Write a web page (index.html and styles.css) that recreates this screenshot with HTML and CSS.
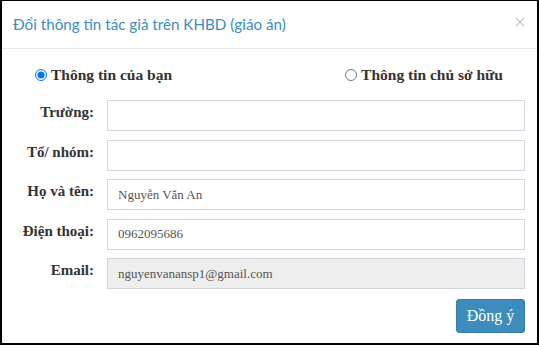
FILE: index.html
```html
<!DOCTYPE html>
<html lang="vi">
<head>
<meta charset="utf-8">
<link rel="stylesheet" href="styles.css">
</head>
<body>
<div class="modal">
  <div class="modal-header">
    <h4 class="modal-title">Đổi thông tin tác giả trên KHBD (giáo án)</h4>
    <span class="close"><svg width="10" height="10" viewBox="0 0 10 10"><path d="M1 1L9 9M9 1L1 9" stroke="#c4c4c4" stroke-width="1.1" fill="none"/></svg></span>
  </div>
  <div class="modal-body">
    <div class="radios">
      <label class="radio"><input type="radio" name="who" checked> Thông tin của bạn</label>
      <label class="radio"><input type="radio" name="who"> Thông tin chủ sở hữu</label>
    </div>
    <div class="form">
      <label class="lbl">Trường:</label><div class="input"></div>
      <label class="lbl">Tổ/ nhóm:</label><div class="input"></div>
      <label class="lbl">Họ và tên:</label><div class="input">Nguyễn Văn An</div>
      <label class="lbl">Điện thoại:</label><div class="input">0962095686</div>
      <label class="lbl">Email:</label><div class="input disabled">nguyenvanansp1@gmail.com</div>
    </div>
    <div class="footer">
      <button class="btn">Đồng ý</button>
    </div>
  </div>
</div>
</body>
</html>
```
FILE: styles.css
```css
* { box-sizing: border-box; }
html, body { margin: 0; padding: 0; background: #fff; }
.modal {
  width: 539px;
  height: 345px;
  border-style: solid;
  border-color: #000;
  border-width: 1px 2px 2px 2px;
  font-family: "Liberation Serif", "Times New Roman", serif;
  color: #333;
  background: #fff;
  display: flex;
  flex-direction: column;
}
.modal-header {
  height: 48px;
  border-bottom: 1px solid #e9e9e9;
  display: flex;
  align-items: center;
  justify-content: space-between;
  padding: 0 12px 0 11px;
}
.modal-title {
  margin: 0;
  font-family: Lato, "Open Sans", sans-serif;
  font-weight: 400;
  font-size: 15.2px;
  color: #3c8dbc;
  padding-bottom: 2px;
}
.close { display: flex; width: 10px; height: 10px; margin-bottom: 6px; }
.modal-body { display: flex; flex-direction: column; }
.radios {
  display: flex;
  justify-content: space-between;
  padding: 17px 34px 0 33px;
  height: 51px;
}
.radio {
  font-weight: 700;
  font-size: 15.5px;
  display: flex;
  align-items: center;
  height: 17px;
}
.radio input { margin: 0 4px 0 0; width: 12px; height: 12px; }
.form {
  display: grid;
  grid-template-columns: 92px 1fr;
  column-gap: 13px;
  row-gap: 8.5px;
  padding-right: 12px;
}
.lbl {
  font-weight: 700;
  font-size: 15px;
  height: 31px;
  display: flex;
  align-items: flex-start;
  justify-content: flex-end;
  line-height: 24px;
}
.input {
  height: 31px;
  border: 1px solid #d2d6de;
  background: #fff;
  font-size: 13px;
  color: #555;
  padding: 0 10px;
  display: flex;
  align-items: center;
}
.input.disabled { background: #eee; }
.footer { display: flex; justify-content: flex-end; padding: 10px 12px 0 0; }
.btn {
  width: 69px;
  height: 34px;
  background: #3c8dbc;
  border: 1px solid #367fa9;
  border-radius: 3px;
  color: #fff;
  font-family: "Liberation Serif", "Times New Roman", serif;
  font-size: 16px;
  padding: 0;
}
```
